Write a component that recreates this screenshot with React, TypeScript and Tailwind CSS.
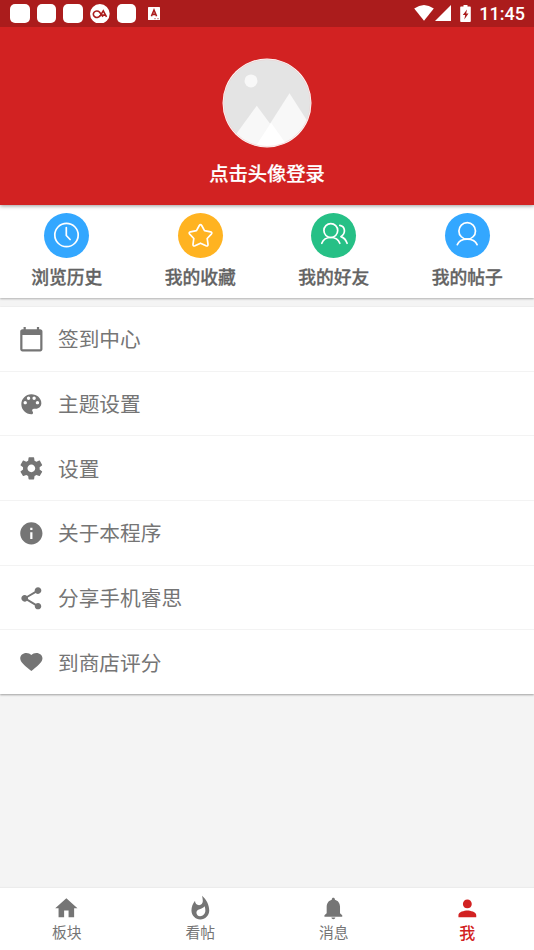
import { useState } from 'react';
import {
  MdCalendarToday,
  MdHome,
  MdInfo,
  MdPerson,
  MdShare,
  MdWhatshot,
} from 'react-icons/md';

type IconProps = { className?: string };

const shortcuts = [
  { label: '浏览历史', bg: 'bg-[#33a7ff]', icon: <ClockIcon /> },
  { label: '我的收藏', bg: 'bg-[#ffb321]', icon: <StarIcon /> },
  { label: '我的好友', bg: 'bg-[#26c086]', icon: <FriendsIcon /> },
  { label: '我的帖子', bg: 'bg-[#33a7ff]', icon: <UserIcon /> },
];

const menuItems = [
  { label: '签到中心', icon: MdCalendarToday },
  { label: '主题设置', icon: PaletteIcon },
  { label: '设置', icon: GearIcon },
  { label: '关于本程序', icon: MdInfo },
  { label: '分享手机睿思', icon: MdShare },
  { label: '到商店评分', icon: HeartIcon },
];

const tabs = [
  { label: '板块', icon: MdHome },
  { label: '看帖', icon: MdWhatshot },
  { label: '消息', icon: BellIcon },
  { label: '我', icon: MdPerson },
];

const strokeProps = {
  viewBox: '0 0 45 45',
  className: 'w-full h-full',
  fill: 'none',
  stroke: '#fff',
  strokeWidth: 1.7,
  strokeLinecap: 'round',
  strokeLinejoin: 'round',
} as const;

function ClockIcon() {
  return (
    <svg {...strokeProps}>
      <circle cx="22.5" cy="22" r="11.7" />
      <path d="M22.3 14.5v8l3.8 4" />
    </svg>
  );
}

function StarIcon() {
  return (
    <svg {...strokeProps}>
      <path d="M21.3 12.5q1.2-1.8 2.4 0l2.8 5.2 6 1.1q2.2.6.8 2.3l-4.1 4.4.8 5.9q0 2.2-2 1.4l-5.5-2.6-5.5 2.6q-2 .8-2-1.4l.8-5.9-4.1-4.4q-1.4-1.7.8-2.3l6-1.1z" />
    </svg>
  );
}

function FriendsIcon() {
  return (
    <svg {...strokeProps}>
      <circle cx="19.8" cy="17.6" r="6.9" />
      <path d="M10.8 30.3c1.3-3.5 4.5-5.8 9-5.8s7.7 2.3 9 5.8M28.8 12.3c5.600 1 6.300 8 1.100 11.300 3 1 5.100 3.400 6.200 6.700" />
    </svg>
  );
}

function UserIcon() {
  return (
    <svg {...strokeProps}>
      <circle cx="22.2" cy="17.9" r="8.3" />
      <path d="M12.3 31.7c1.5-3.600 5-5.500 9.900-5.500s8.400 1.900 9.900 5.500" />
    </svg>
  );
}

function PaletteIcon({ className }: IconProps) {
  return (
    <svg viewBox="0 0 24 24" fill="currentColor" className={className}>
      <path d="M12 3c-4.970 0-9 4.030-9 9s4.030 9 9 9c.83 0 1.500-.67 1.500-1.500 0-.39-.15-.74-.39-1.010-.23-.26-.38-.61-.38-.99 0-.83.67-1.500 1.500-1.500H16c2.760 0 5-2.240 5-5 0-4.420-4.030-8-9-8zm-5.500 9c-.83 0-1.500-.67-1.500-1.500S5.670 9 6.500 9 8 9.670 8 10.500 7.330 12 6.500 12zm3-4C8.670 8 8 7.330 8 6.500S8.670 5 9.500 5s1.500.67 1.500 1.500S10.330 8 9.500 8zm5 0c-.83 0-1.500-.67-1.500-1.500S13.670 5 14.500 5s1.500.67 1.500 1.500S15.330 8 14.500 8zm3 4c-.83 0-1.500-.67-1.500-1.500S16.670 9 17.500 9s1.500.67 1.500 1.500-.67 1.500-1.500 1.500z" />
    </svg>
  );
}

function GearIcon({ className }: IconProps) {
  return (
    <svg viewBox="0 0 24 24" fill="currentColor" className={className}>
      <path d="M19.43 12.98c.04-.32.07-.64.07-.98s-.03-.66-.07-.98l2.11-1.65c.19-.15.24-.42.12-.64l-2-3.46c-.12-.22-.39-.3-.61-.22l-2.49 1c-.52-.4-1.08-.73-1.69-.98l-.38-2.65C14.46 2.18 14.25 2 14 2h-4c-.25 0-.46.18-.49.42l-.38 2.65c-.61.25-1.17.59-1.69.98l-2.49-1c-.23-.09-.49 0-.61.22l-2 3.46c-.13.22-.07.49.12.64l2.11 1.65c-.04.32-.07.65-.07.98s.03.66.07.98l-2.11 1.65c-.19.15-.24.42-.12.64l2 3.46c.12.22.39.3.61.22l2.49-1c.52.4 1.08.73 1.69.98l.38 2.65c.03.24.24.42.49.42h4c.25 0 .46-.18.49-.42l.38-2.65c.61-.25 1.17-.59 1.69-.98l2.49 1c.23.09.49 0 .61-.22l2-3.46c.12-.22.07-.49-.12-.64l-2.11-1.65zM12 15.5c-1.93 0-3.5-1.57-3.5-3.5s1.57-3.5 3.5-3.5 3.5 1.57 3.5 3.5-1.57 3.5-3.5 3.5z" />
    </svg>
  );
}

function HeartIcon({ className }: IconProps) {
  return (
    <svg viewBox="0 0 24 24" fill="currentColor" className={className}>
      <path
        transform="matrix(1 0 0 .885 0 .9)"
        d="M12 21.350l-1.450-1.320C5.400 15.360 2 12.280 2 8.500 2 5.420 4.420 3 7.500 3c1.740 0 3.410.81 4.500 2.090C13.090 3.810 14.760 3 16.500 3 19.580 3 22 5.420 22 8.500c0 3.780-3.400 6.860-8.550 11.540L12 21.350z"
      />
    </svg>
  );
}

function BellIcon({ className }: IconProps) {
  return (
    <svg viewBox="0 0 24 24" fill="currentColor" className={className}>
      <path d="M18 16.500v-6c0-3.100-1.900-5.500-4.600-6.200v-.5c0-.8-.6-1.400-1.400-1.400s-1.400.6-1.400 1.400v.5C7.900 5 6 7.400 6 10.500v6l-2 1.800v1.200h16v-1.200zM10.200 20.300c.2 1 .9 1.500 1.800 1.500s1.600-.5 1.800-1.500z" />
    </svg>
  );
}

function StatusBar() {
  return (
    <div className="relative z-10 h-[27px] bg-[#ab1c1c] flex items-center justify-between pl-[10px] pr-[9px] text-white">
      <div className="flex items-center gap-[7px]">
        <span className="w-[19.7px] h-[19.7px] rounded-[5px] bg-white" />
        <span className="w-[19.7px] h-[19.7px] rounded-[5px] bg-white" />
        <span className="w-[19.7px] h-[19.7px] rounded-[5px] bg-white" />
        <svg viewBox="0 0 20 20" className="w-[19.7px] h-[19.7px]" fill="none" stroke="#ab1c1c" strokeWidth="1.6">
          <circle cx="10" cy="10" r="10" fill="#fff" stroke="none" />
          <path d="M10.300 11.600A3.600 3.300 0 1 1 9.600 8.100L13.200 13M10 12.600l3.500-5.600 3.300 6M12 11.300h3.500" />
        </svg>
        <span className="w-[19.7px] h-[19.7px] rounded-[5px] bg-white" />
        <svg viewBox="0 0 12 13" className="w-3 h-[13px] ml-[4.500px]">
          <rect width="12" height="13" rx=".6" fill="#fff" />
          <path d="M3.400 9.200 6 3l2.600 6.200M4.300 7.400h3.400" fill="none" stroke="#ab1c1c" strokeWidth="1.6" />
          <path d="M6 11.700h2M9 11.700h2" stroke="#ab1c1c" strokeWidth=".5" />
        </svg>
      </div>
      <div className="flex items-center">
        <svg viewBox="0 0 20 16" className="w-5 h-4 mb-px" fill="#fff">
          <path d="M.2 3.600Q10-3.400 19.800 3.600L10 15.800z" />
        </svg>
        <svg viewBox="0 0 16 16" className="w-4 h-4 ml-[1px] mb-px" fill="#fff">
          <path d="M16 0v16H0z" />
        </svg>
        <svg viewBox="0 0 11 17" className="w-[11px] h-[17px] ml-[9px] mb-px">
          <path d="M3.500 0h4v1.600H10q.8 0 .8.900v13.600q0 .9-.8.900H1q-.8 0-.8-.9V2.500q0-.9.800-.9h2.500z" fill="#fff" />
          <path d="M7 4.500 2.800 10h2.400l-.9 4.400L8.500 8.500H6.200z" fill="#ab1c1c" />
        </svg>
        <span className="ml-[8px] mt-px font-['Roboto',sans-serif] font-medium text-[18px] leading-[26px]">11:45</span>
      </div>
    </div>
  );
}

function Avatar() {
  return (
    <svg viewBox="0 0 90 90" className="w-[90px] h-[90px]">
      <defs>
        <clipPath id="avatar">
          <circle cx="45" cy="45" r="43.5" />
        </clipPath>
      </defs>
      <circle cx="45" cy="45" r="44.5" fill="#fff" />
      <g clipPath="url(#avatar)">
        <rect width="90" height="90" fill="#e4e4e4" />
        <circle cx="29" cy="22.9" r="6.5" fill="#f8f8f8" />
        <path d="M34.800 47.700 4 90h62z" fill="#f8f8f8" />
        <path d="M67.500 35.200 32.500 90h70z" fill="#f8f8f8" />
        <path d="M49 64.700 32.500 90H67z" fill="#fff" />
      </g>
      <circle cx="45" cy="45" r="43.5" fill="none" stroke="#efb9b9" strokeWidth=".4" />
    </svg>
  );
}

export default function App() {
  const [activeTab, setActiveTab] = useState('我');

  return (
    <div className="w-full h-[950px] flex flex-col overflow-hidden bg-[#f4f4f4] font-['Noto_Sans_CJK_SC',sans-serif]">
      <StatusBar />

      {/* Header */}
      <header className="relative h-[178px] bg-[#d22222] flex flex-col items-center pt-[30.5px] shadow-[0_1px_4px_rgba(0,0,0,0.4)]">
        <Avatar />
        <p className="mt-[11.5px] text-white font-medium text-[19.3px] leading-7 [-webkit-text-stroke:0.2px]">点击头像登录</p>
      </header>

      {/* Shortcuts */}
      <section className="h-[93px] bg-white grid grid-cols-4 shadow-[0_1px_2px_rgba(0,0,0,0.28)]">
        {shortcuts.map(item => (
          <button key={item.label} className="flex flex-col items-center pt-[8.4px]">
            <span className={`w-[45px] h-[45px] rounded-full ${item.bg}`}>{item.icon}</span>
            <span className="mt-[5px] text-[17.8px] leading-[26px] font-medium text-[#636363] [-webkit-text-stroke:0.3px]">
              {item.label}
            </span>
          </button>
        ))}
      </section>

      {/* Menu */}
      <section className="mt-[9px] bg-white shadow-[0_1px_2px_rgba(0,0,0,0.35)]">
        {menuItems.map(({ label, icon: Icon }) => (
          <button
            key={label}
            className="w-full h-[64.65px] last:h-16 flex items-center pl-[17.8px] border-b border-[#f3f3f3] last:border-b-0 text-[#757575]"
          >
            <Icon className="w-[26.7px] h-[26.7px] mt-px" />
            <span className="ml-[13.5px] mb-px text-[20.7px] leading-[30px]">{label}</span>
          </button>
        ))}
      </section>

      {/* Bottom tabs */}
      <nav className="mt-auto h-[62px] bg-white grid grid-cols-4 shadow-[0_-1px_1px_rgba(0,0,0,0.03)]">
        {tabs.map(({ label, icon: Icon }) => (
          <button
            key={label}
            onClick={() => setActiveTab(label)}
            className={`flex flex-col items-center pt-[7px] ${
              activeTab === label ? 'text-[#d22222] font-medium text-[16px]' : 'text-[#757575] text-[14.8px]'
            }`}
          >
            <Icon className="w-[26.7px] h-[26.7px]" />
            <span className="-mt-px leading-[22px]">{label}</span>
          </button>
        ))}
      </nav>
    </div>
  );
}
